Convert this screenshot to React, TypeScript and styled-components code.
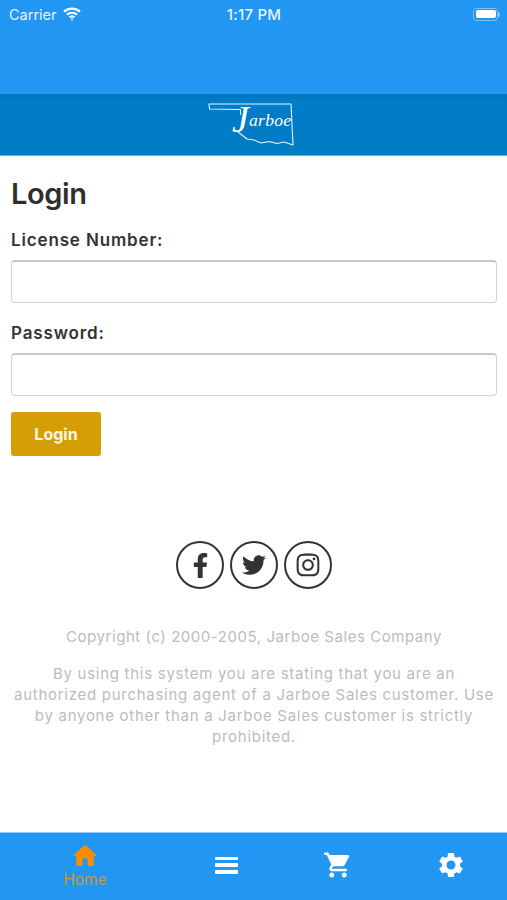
import React from 'react';
import styled, { createGlobalStyle } from 'styled-components';
import { FaFacebookF, FaTwitter, FaInstagram } from 'react-icons/fa';
import { MdHome, MdShoppingCart, MdSettings } from 'react-icons/md';

const Global = createGlobalStyle`
  html, body { margin: 0; padding: 0; background: #fff; }
  body { font-family: "Inter", "Open Sans", "Liberation Sans", sans-serif; }
`;

const Page = styled.div`
  width: 507px;
  height: 900px;
  display: flex;
  flex-direction: column;
  overflow: hidden;
`;

// Top of the screen
const TopBar = styled.div`
  height: 94px;
  background: #2196f3;
  color: #fff;
  box-sizing: border-box;
  padding: 4px 8px 0 9px;
`;

const StatusRow = styled.div`
  display: grid;
  grid-template-columns: 1fr auto 1fr;
  align-items: center;
  height: 20px;
  font-family: "Inter", "Liberation Sans", sans-serif;
  font-size: 14.5px;
  color: #e8f4fe;
`;

const Carrier = styled.div`
  display: flex;
  align-items: center;
  gap: 6px;
`;

const Clock = styled.div`
  font-size: 15px;
  font-weight: 500;
  letter-spacing: 0.2px;
`;

const Battery = styled.div`
  position: relative;
  justify-self: end;
  width: 25px;
  height: 13px;
  box-sizing: border-box;
  border: 1px solid #7fc0f7;
  border-radius: 4px;
  padding: 1.5px;
  margin-right: 1px;
  &::before {
    content: '';
    display: block;
    height: 100%;
    background: #fff;
    border-radius: 2px;
  }
  &::after {
    content: '';
    position: absolute;
    right: -3px;
    top: 3px;
    width: 2px;
    height: 5px;
    background: #7fc0f7;
    border-radius: 0 2px 2px 0;
  }
`;

const LogoBar = styled.div`
  height: 62px;
  box-sizing: border-box;
  background: linear-gradient(#0274ba, #007cc8 12%, #007bc5);
  border-bottom: 1px solid #63b5f0;
  display: flex;
  justify-content: center;
  align-items: center;
  padding-top: 3px;
`;

// Login form
const Content = styled.main`
  flex: 1;
  padding: 0 10px 0 11px;
  color: #333;
`;

const Title = styled.h1`
  margin: 19px 0 0;
  font-size: 29px;
  line-height: 38px;
  font-weight: 600;
  letter-spacing: -0.4px;
  color: #2f2f2f;
`;

const Field = styled.div<{ $top: number }>`
  margin-top: ${(p) => p.$top}px;
`;

const Label = styled.label`
  display: block;
  font-size: 17px;
  line-height: 22px;
  font-weight: 600;
  letter-spacing: 0.85px;
  color: #333;
`;

const Input = styled.input`
  display: block;
  box-sizing: border-box;
  width: 100%;
  height: 43px;
  margin-top: 9px;
  border: 1px solid #d4d4d4;
  border-top: 2px solid #c8c8c8;
  border-radius: 4px;
  background: #fff;
  outline: none;
`;

const LoginButton = styled.button`
  display: block;
  width: 90px;
  height: 44px;
  margin-top: 16px;
  border: 0;
  border-radius: 3px;
  background: #d69e05;
  color: #fdf6e3;
  font-family: inherit;
  font-size: 16px;
  font-weight: 700;
`;

const Socials = styled.div`
  display: flex;
  justify-content: center;
  gap: 6px;
  margin-top: 85px;
`;

const SocialLink = styled.a<{ $size: number }>`
  width: 48px;
  height: 48px;
  box-sizing: border-box;
  border: 2px solid #333;
  border-radius: 50%;
  display: flex;
  align-items: center;
  justify-content: center;
  color: #333;
  font-size: ${(p) => p.$size}px;
`;

const Copyright = styled.p`
  margin: 37px 0 0;
  text-align: center;
  font-size: 15px;
  line-height: 21px;
  letter-spacing: 0.55px;
  color: #bcbcbc;
`;

const Notice = styled(Copyright)`
  margin-top: 16px;
  letter-spacing: 0.72px;
  white-space: nowrap;
`;

// Bottom tabs
const TabBar = styled.nav`
  height: 68px;
  box-sizing: border-box;
  background: #2196f3;
  border-top: 1px solid #8fcbf8;
  display: grid;
  grid-template-columns: 170px repeat(3, 1fr);
`;

const Tab = styled.div`
  display: flex;
  flex-direction: column;
  align-items: center;
  justify-content: center;
  color: #fff;
  font-size: 30px;
  height: 64px;
`;

const HomeTab = styled(Tab)`
  color: #fb8c00;
  justify-content: flex-start;
  padding-top: 8px;
  height: 56px;
`;

const TabLabel = styled.span`
  font-size: 15.5px;
  line-height: 19px;
  margin-top: -1px;
  color: #c69a3a;
`;

const MenuIcon = styled.div`
  width: 23px;
  height: 17px;
  display: flex;
  flex-direction: column;
  justify-content: space-between;
  span {
    display: block;
    height: 3.5px;
    background: #fff;
    border-radius: 1px;
  }
`;

function Wifi() {
  return (
    <svg width="18" height="14" viewBox="0 0 18 14" fill="none" stroke="#f2f9ff" strokeWidth="2.2">
      <path d="M1 4.6C5.5.6 12.5.6 17 4.6" />
      <path d="M3.9 7.6c2.9-2.500 7.300-2.500 10.200 0" />
      <path d="M6.6 10.3c1.400-1.100 3.400-1.100 4.800 0" />
      <circle cx="9" cy="12.4" r="1" fill="#f2f9ff" stroke="none" />
    </svg>
  );
}

function Logo() {
  return (
    <svg width="90" height="48" viewBox="0 0 90 48" fill="none" overflow="visible">
      <path
        d="M31.500 13 L31.500 7.500 L0.500 7 L0 2 L82 2 L84 43 L75 40 L68 41.500 L60 39.500 L52 41 L45 38 L38 37 L29 30"
        stroke="#e9f5fd"
        strokeWidth="1.1"
        strokeLinejoin="round"
      />
      <text fill="#fff" fontFamily="'Liberation Serif', serif" fontStyle="italic">
        <tspan x="23" y="29.500" fontSize="38">J</tspan>
        <tspan x="40" y="24" fontSize="17.500" letterSpacing="0.3">arboe</tspan>
      </text>
    </svg>
  );
}

export default function App() {
  return (
    <Page>
      <Global />
      <TopBar>
        <StatusRow>
          <Carrier>
            Carrier <Wifi />
          </Carrier>
          <Clock>1:17 PM</Clock>
          <Battery />
        </StatusRow>
      </TopBar>
      <LogoBar>
        <Logo />
      </LogoBar>

      <Content>
        <Title>Login</Title>
        <Field $top={16}>
          <Label>License Number:</Label>
          <Input type="text" />
        </Field>
        <Field $top={19}>
          <Label>Password:</Label>
          <Input type="password" />
        </Field>
        <LoginButton>Login</LoginButton>

        <Socials>
          <SocialLink $size={25}><FaFacebookF /></SocialLink>
          <SocialLink $size={24}><FaTwitter /></SocialLink>
          <SocialLink $size={26}><FaInstagram /></SocialLink>
        </Socials>

        <Copyright>Copyright (c) 2000-2005, Jarboe Sales Company</Copyright>
        <Notice>
          By using this system you are stating that you are an
          <br />
          authorized purchasing agent of a Jarboe Sales customer. Use
          <br />
          by anyone other than a Jarboe Sales customer is strictly
          <br />
          prohibited.
        </Notice>
      </Content>

      <TabBar>
        <HomeTab>
          <MdHome />
          <TabLabel>Home</TabLabel>
        </HomeTab>
        <Tab>
          <MenuIcon><span /><span /><span /></MenuIcon>
        </Tab>
        <Tab><MdShoppingCart /></Tab>
        <Tab><MdSettings /></Tab>
      </TabBar>
    </Page>
  );
}
